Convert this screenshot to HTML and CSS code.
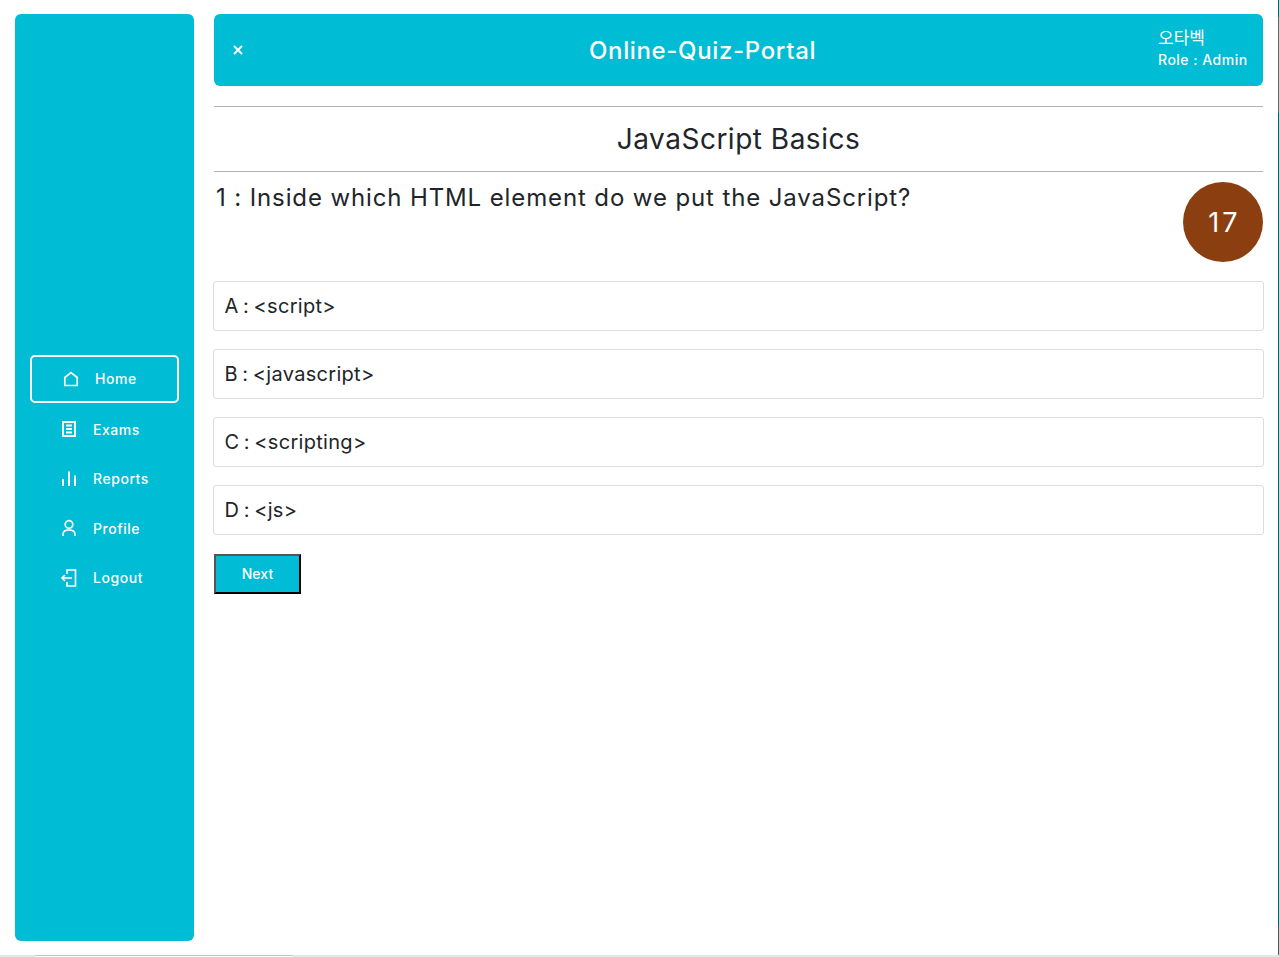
FILE: index.html
```html
<!DOCTYPE html>
<html lang="en">
<head>
<meta charset="utf-8">
<title>Online-Quiz-Portal</title>
<link rel="stylesheet" href="styles.css">
</head>
<body>
<div class="page">
  <aside class="sidebar">
    <nav class="menu">
      <a class="item active"><svg class="icon" viewBox="0 0 18 18"><path d="M2.800 15.500V7.500L9 2.500l6.200 5v8z"/></svg><span>Home</span></a>
      <a class="item"><svg class="icon exams" viewBox="0 0 18 18"><path d="M3 2h12v14H3zM6 5.500h6M6 9h6M6 12.500h6"/></svg><span>Exams</span></a>
      <a class="item"><svg class="icon bars" viewBox="0 0 18 18"><path d="M3 16V9M9 16V1.500M15 16V5.500"/></svg><span>Reports</span></a>
      <a class="item"><svg class="icon" viewBox="0 0 18 18"><circle cx="9" cy="5.500" r="3.800"/><path d="M3 17v-1.500c0-3 2.500-4.500 6-4.500s6 1.500 6 4.500V17"/></svg><span>Profile</span></a>
      <a class="item"><svg class="icon" viewBox="0 0 18 18"><path d="M7 5V1h8.500v16H7v-4M12 9H2M5 6L2 9l3 3"/></svg><span>Logout</span></a>
    </nav>
  </aside>
  <main class="main">
    <header class="topbar">
      <svg class="close" viewBox="0 0 10 10"><path d="M1 1l8 8M9 1L1 9"/></svg>
      <div class="brand">Online-Quiz-Portal</div>
      <div class="user">
        <div class="user-name">오타벡</div>
        <div class="user-role">Role : Admin</div>
      </div>
    </header>
    <h1 class="quiz-title">JavaScript Basics</h1>
    <div class="question-row">
      <div class="question">1 : Inside which HTML element do we put the JavaScript?</div>
      <div class="timer">17</div>
    </div>
    <div class="options">
      <div class="option">A : &lt;script&gt;</div>
      <div class="option">B : &lt;javascript&gt;</div>
      <div class="option">C : &lt;scripting&gt;</div>
      <div class="option">D : &lt;js&gt;</div>
    </div>
    <button class="next">Next</button>
  </main>
</div>
<div class="edge-right"></div>
<div class="edge-bottom"><div class="edge-tab"></div></div>
</body>
</html>
```
FILE: styles.css
```css
* { box-sizing: border-box; }
html, body { margin: 0; height: 100%; }
body {
  height: 957px;
  overflow: hidden;
  background: #fff;
  color: #212529;
  font-family: "Inter", "Noto Sans CJK KR", sans-serif;
}
.page {
  display: flex;
  height: 957px;
  padding: 14px 16px 16px 15px;
  gap: 20px;
}
.sidebar {
  width: 179px;
  background: #00bcd4;
  border-radius: 6px;
  display: flex;
  flex-direction: column;
  justify-content: center;
  padding: 0 15px;
}
.menu { display: flex; flex-direction: column; margin-top: 2px; }
.item {
  display: flex;
  align-items: center;
  height: 49.400px;
  padding-left: 30px;
  gap: 15px;
  color: #fff;
  font-size: 14px;
  letter-spacing: 0.55px;
  font-weight: 500;
}
.item.active {
  height: 48px;
  margin-bottom: 2px;
  padding-left: 30px;
  border: 2px solid #fff;
  border-radius: 5px;
}
.icon {
  width: 18px;
  height: 18px;
  fill: none;
  stroke: #fff;
  stroke-width: 1.700;
}
.icon.exams { stroke-width: 1.900; }
.icon.bars { stroke-width: 2; }
.main { flex: 1; display: flex; flex-direction: column; }
.topbar {
  height: 72px;
  background: #00bcd4;
  border-radius: 6px;
  color: #fff;
  display: flex;
  align-items: center;
  padding: 0 14px 0 19px;
}
.close { width: 10px; height: 10px; fill: none; stroke: #fff; stroke-width: 2; }
.brand { font-size: 24px; letter-spacing: 0.65px; font-weight: 500; margin-left: 346px; }
.user { margin-left: auto; width: 91px; padding-bottom: 4px; }
.user-name { font-size: 17px; line-height: 24px; white-space: nowrap; }
.user-role { font-size: 14px; letter-spacing: 0.5px; font-weight: 500; line-height: 20px; white-space: nowrap; }
.quiz-title {
  margin: 20px 0 0;
  height: 66px;
  border-top: 1px solid #b5b5b5;
  border-bottom: 1px solid #b5b5b5;
  text-align: center;
  font-size: 28px;
  letter-spacing: 0.5px;
  font-weight: 400;
  line-height: 64px;
}
.question-row { display: flex; justify-content: space-between; padding-top: 10px; height: 109px; }
.question { font-size: 24px; letter-spacing: 0.88px; line-height: 32px; padding-left: 2px; }
.timer {
  width: 80px;
  height: 80px;
  border-radius: 50%;
  background: #8b3e0f;
  color: #fff;
  font-size: 27px;
  letter-spacing: 3px;
  padding-left: 3px;
  display: flex;
  align-items: center;
  justify-content: center;
}
.options { display: flex; flex-direction: column; gap: 18px; margin-right: -1px; margin-left: -1px; }
.option {
  height: 50px;
  border: 1px solid #ddd;
  border-radius: 3px;
  padding-left: 10.500px;
  font-size: 20px;
  letter-spacing: 0.3px;
  word-spacing: -1.500px;
  line-height: 48px;
}
.next {
  align-self: flex-start;
  margin-top: 19px;
  width: 87px;
  height: 40px;
  padding: 0 0 2px;
  background: #00bcd4;
  color: #fff;
  font-family: inherit;
  font-size: 14px;
  letter-spacing: 0.1px;
  font-weight: 500;
  border: 2px solid;
  border-color: #555 #000 #000 #555;
}
.edge-right {
  position: absolute;
  top: 0;
  right: 0;
  width: 1px;
  height: 955px;
  background: linear-gradient(#0b5d68 0, #0b5d68 17px, #666 17px, #666 113px, #0b5d68 113px, #0b5d68 925px, #555 925px);
}
.edge-bottom {
  position: absolute;
  left: 0;
  right: 0;
  bottom: 0;
  height: 2px;
  background: #e6e6e6;
}
.edge-tab {
  margin-left: 35px;
  width: 258px;
  height: 2px;
  background: #fff;
  border-top: 1px solid #c4c4c4;
}
```
